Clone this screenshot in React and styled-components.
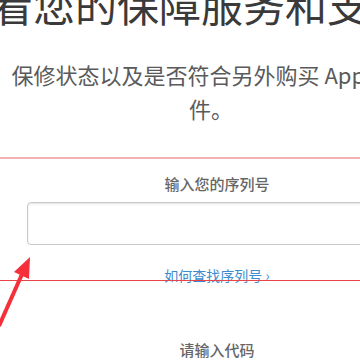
import styled, { createGlobalStyle } from "styled-components";

const GlobalStyle = createGlobalStyle`
  html, body {
    margin: 0;
    padding: 0;
    background: #fff;
    overflow: hidden;
  }
  body {
    font-family: "Noto Sans CJK SC", "Noto Sans", sans-serif;
  }
`;

const Page = styled.div`
  position: relative;
  width: 360px;
  height: 360px;
  overflow: hidden;
`;

const Heading = styled.h1`
  display: flex;
  justify-content: center;
  height: 28px;
  margin: -17px 0 0;
  font-size: 42px;
  line-height: 42px;
  font-weight: 400;
  color: #3a3a3a;
  white-space: nowrap;
`;

const Intro = styled.p`
  width: 406px;
  margin: 46px 0 0 8px;
  font-size: 22px;
  line-height: 34px;
  color: #5a5a5a;
  text-align: center;
`;

const Divider = styled.div`
  height: 2px;
  margin-top: 32px;
  background: #f1b2b2;
`;

const Form = styled.div`
  width: 380px;
  margin-left: 27px;
  display: flex;
  flex-direction: column;
  align-items: center;
`;

const Label = styled.label`
  margin-top: ${(props) => props.$top}px;
  font-size: 15px;
  line-height: 20px;
  font-weight: 500;
  color: #666;
`;

const Field = styled.input`
  box-sizing: border-box;
  width: 100%;
  height: 43px;
  margin-top: 8px;
  border: 1px solid #c9c9c9;
  border-radius: 4px;
  box-shadow: inset 0 1px 2px rgba(0, 0, 0, 0.12);
  background: #fff;
  outline: none;
`;

const HelpLink = styled.a`
  margin-top: 20px;
  font-size: 14px;
  line-height: 20px;
  color: #3d8bd0;
  text-decoration: none;
`;

const MarkLine = styled.div`
  position: absolute;
  left: 0;
  top: 280px;
  width: 360px;
  height: 1px;
  background: #e8454a;
`;

const Arrow = styled.svg`
  position: absolute;
  left: 0;
  top: 250px;
`;

export default function App() {
  return (
    <Page>
      <GlobalStyle />
      <Heading>查看您的保障服务和支持</Heading>
      <Intro>保修状态以及是否符合另外购买 Apple 配件。</Intro>
      <Divider />
      <Form>
        <Label $top={15}>输入您的序列号</Label>
        <Field type="text" />
        <HelpLink href="#">如何查找序列号 ›</HelpLink>
        <Label $top={55}>请输入代码</Label>
      </Form>
      <MarkLine />
      <Arrow width="40" height="80" viewBox="0 250 40 80">
        <line x1="-1" y1="326" x2="23" y2="272" stroke="#f5303a" strokeWidth="4" />
        <polygon points="30,257 14,272 29,279" fill="#f5303a" />
      </Arrow>
    </Page>
  );
}
